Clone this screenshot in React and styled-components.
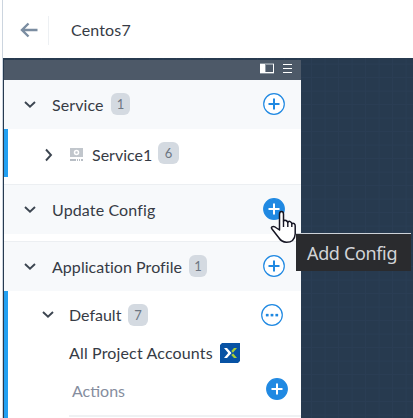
import React from "react";
import styled, { createGlobalStyle } from "styled-components";

const GlobalStyle = createGlobalStyle`
  * { box-sizing: border-box; }
  body { margin: 0; overflow: hidden; background: #fff; }
`;

const Page = styled.div`
  position: relative;
  width: 413px;
  height: 418px;
  padding-left: 2px;
  overflow: hidden;
  background: #fff;
  color: #363b45;
  font-family: Lato, "Liberation Sans", sans-serif;
  font-size: 16px;
`;

const Header = styled.header`
  display: flex;
  align-items: center;
  height: 58px;
  padding: 2px 0 0 17px;
  border-left: 1px solid #ccd5df;
`;

const BackIcon = styled.svg`
  width: 18px;
  height: 16px;
  fill: none;
  stroke: #7b8da1;
  stroke-width: 2.4;
`;

const Divider = styled.div`
  width: 1px;
  height: 29px;
  margin: 0 22px 0 10px;
  background: #edf0f3;
`;

const Workspace = styled.main`
  display: flex;
  height: 360px;
  padding-top: 2px;
  border-left: 1px solid #ccd5df;
  padding-left: 1px;
  background-color: #273a4f;
  background-image:
    linear-gradient(90deg, transparent 12.5px, #2a3d54 12.5px),
    linear-gradient(transparent 12.5px, #2a3d54 12.5px);
  background-size: 13.5px 13.5px;
  background-position: 12px -7px;
`;

const Panel = styled.section`
  width: 297px;
  height: 358px;
  background: #fff;
`;

const Toolbar = styled.div`
  display: flex;
  align-items: center;
  justify-content: flex-end;
  gap: 9px;
  height: 20px;
  padding: 0 9px 3px 0;
  background: #4d5968;
`;

const Glyph = styled.svg`
  display: block;
  flex: none;
  width: ${(p) => p.$w}px;
  height: ${(p) => p.$h}px;
  margin-left: ${(p) => p.$ml || 0}px;
`;

const SectionRow = styled.div`
  display: flex;
  align-items: center;
  height: ${(p) => p.$h}px;
  margin-bottom: ${(p) => p.$gap || 0}px;
  padding: 0 16px 0 20px;
  background: #f7f9fb;
  border-top: ${(p) => (p.$line ? "1px solid #eceff2" : "0")};
`;

const Nested = styled.div`
  height: ${(p) => p.$h}px;
  margin-bottom: ${(p) => p.$gap || 0}px;
  border-left: 4px solid #22a0f2;
`;

const ItemRow = styled.div`
  display: flex;
  align-items: center;
  height: ${(p) => p.$h}px;
  padding: 0 18px 0 ${(p) => p.$indent}px;
`;

const Label = styled.span`
  flex: none;
  width: ${(p) => p.$w}px;
  margin-left: ${(p) => p.$ml || 0}px;
  line-height: 20px;
  white-space: nowrap;
  letter-spacing: ${(p) => p.$ls || 0}px;
  color: ${(p) => (p.$muted ? "#858d9e" : "inherit")};
`;

const Badge = styled.span`
  display: flex;
  align-items: center;
  justify-content: center;
  width: ${(p) => p.$w}px;
  height: 22px;
  margin: 0 0 ${(p) => p.$lift || 0}px 7px;
  border-radius: 6px;
  background: #d4dae1;
  color: #6d7682;
  font-size: 13px;
`;

const IconButton = styled.button`
  flex: none;
  width: 22px;
  height: 22px;
  margin: 0 0 ${(p) => p.$lift || 0}px auto;
  padding: 0;
  border: 0;
  background: none;
  svg { display: block; }
`;

const ActionRow = styled.div`
  display: flex;
  align-items: center;
  height: 49px;
  margin-left: 61px;
  padding: 0 13px 0 3px;
`;

const Rule = styled.div`
  height: 2px;
  margin-left: 61px;
  background: #eff1f3;
`;

const Tooltip = styled.div`
  position: absolute;
  left: 296px;
  top: 233px;
  width: 115px;
  height: 38px;
  padding-left: 11px;
  border-top: 1px solid #cdd2d8;
  background: #2a2b2e;
  color: #d2d4d7;
  font: 18px/38px "Noto Sans", "Open Sans", sans-serif;
  letter-spacing: -0.35px;
  white-space: nowrap;
`;

const Pointer = styled.svg`
  position: absolute;
  left: 270px;
  top: 210px;
  width: 27px;
  height: 34px;
`;

const Chevron = ({ right }) => (
  <Glyph $w={12} $h={14} viewBox="0 0 12 14" fill="none" stroke="#3c4550" strokeWidth="1.9">
    <path d={right ? "M3 1.5 8 7 3 12.5" : "M1 4 6 8.8 11 4"} />
  </Glyph>
);

const Action = ({ filled, dots, label, lift }) => (
  <IconButton aria-label={label} $lift={lift}>
    <svg width="22" height="22" viewBox="0 0 22 22">
      <circle cx="11" cy="11" r="10.3" fill={filled ? "#2089e2" : "#fff"} stroke="#2089e2" strokeWidth="1.2" />
      {dots ? (
        <path d="M5 10h2.4v2.2H5zM9.8 10h2.4v2.2H9.8zM14.6 10H17v2.2h-2.4z" fill="#2089e2" stroke="#2089e2" strokeWidth=".3" />
      ) : (
        <path d="M11 5.5v11M5.5 11h11" stroke={filled ? "#fff" : "#2089e2"} strokeWidth="2" />
      )}
    </svg>
  </IconButton>
);

export default function App() {
  return (
    <>
      <GlobalStyle />
      <Page>
        <Header>
          <BackIcon viewBox="0 0 18 16">
            <path d="M17.5 8H2M8.5 1.5 2 8l6.5 6.5" />
          </BackIcon>
          <Divider />
          <Label $w={65} $ls={0.15}>Centos7</Label>
        </Header>
        <Workspace>
          <Panel>
            <Toolbar>
              <Glyph $w={14} $h={11} viewBox="0 0 14 11">
                <path d="M0 0h14v11H0z" fill="#89939d" />
                <path d="M0 1h14v9H0z" fill="#fff" />
                <path d="M5 1h8v8H5z" fill="#929ba5" />
                <path d="M6 2h7v7H6z" fill="#4d5968" />
              </Glyph>
              <Glyph $w={9} $h={10} viewBox="0 0 9 10">
                <path d="M0 .5h9M0 4.5h9M0 8.5h9" stroke="#fff" />
              </Glyph>
            </Toolbar>
            <SectionRow $h={49}>
              <Chevron />
              <Label $ml={16} $w={52} $ls={0.1}>Service</Label>
              <Badge $w={19} $lift={2}>1</Badge>
              <Action label="Add Service" lift={2} />
            </SectionRow>
            <Nested $h={48} $gap={7}>
              <ItemRow $h={51} $indent={35}>
                <Chevron right />
                <Glyph $w={13} $h={13} $ml={15} viewBox="0 0 13 13">
                  <path d="M0 0h13v9H0z" fill="#c1c6cc" />
                  <circle cx="6.5" cy="4.6" r="2" fill="none" stroke="#fff" strokeWidth="1.5" />
                  <path d="M0 11h6v2H0zM7 11h1v2H7zM9 11h1v2H9zM11 11h2v2h-2z" fill="#b8bec5" />
                </Glyph>
                <Label $ml={9} $w={59}>Service1</Label>
                <Badge $w={21} $lift={3}>6</Badge>
              </ItemRow>
            </Nested>
            <SectionRow $h={50} $gap={7} $line>
              <Chevron />
              <Label $ml={16} $w={104} $ls={0.13}>Update Config</Label>
              <Action filled label="Add Config" lift={1} />
            </SectionRow>
            <SectionRow $h={50} $line>
              <Chevron />
              <Label $ml={16} $w={130} $ls={0.05}>Application Profile</Label>
              <Badge $w={18} $lift={2}>1</Badge>
              <Action label="Add Application Profile" lift={2} />
            </SectionRow>
            <Nested $h={127}>
              <ItemRow $h={48} $indent={34}>
                <Chevron />
                <Label $ml={15} $w={52}>Default</Label>
                <Badge $w={20}>7</Badge>
                <Action dots label="Profile options" />
              </ItemRow>
              <ItemRow $h={27} $indent={61}>
                <Label $w={151} $ls={0.15}>All Project Accounts</Label>
                <Glyph $w={20} $h={20} viewBox="0 0 20 20">
                  <path d="M2 0h18v18l-2 2H0V2z" fill="#0752a4" />
                  <path d="M4 5h3l4.5 5L7 15H4l4.2-5z" fill="#fff" />
                  <path d="M17 5h-3l-2.7 3 1.6 1.8zM11.2 12 14 15h3l-3.8-4.6z" fill="#a8cf38" />
                </Glyph>
              </ItemRow>
              <ActionRow>
                <Label $muted $w={60}>Actions</Label>
                <Action filled label="Add Action" lift={3} />
              </ActionRow>
              <Rule />
            </Nested>
          </Panel>
        </Workspace>
        <Tooltip>Add Config</Tooltip>
        <Pointer viewBox="0 0 27 34">
          <path
            d="M9.5 20V4.2Q9.5 1.5 11.5 1.5T13.5 4.2V11Q14.5 9.7 16 10.5T17.8 12.5Q18.5 10.8 20.2 11.6T21.8 13.8Q23 12.7 24.2 13.7T25.2 16V24Q25 28 22.5 30.5Q20.5 32.3 16.5 32.3Q11.5 32 9 28L2 19Q.8 17.5 2 16.8Q4 15.8 6.5 18L9.5 20Z"
            fill="#fff" stroke="#151523" strokeWidth="1.5" strokeLinejoin="round"
          />
          <path d="M13.5 11v6M17.8 12.5V17M21.8 14v3" stroke="#151523" strokeWidth="1.4" />
        </Pointer>
      </Page>
    </>
  );
}
